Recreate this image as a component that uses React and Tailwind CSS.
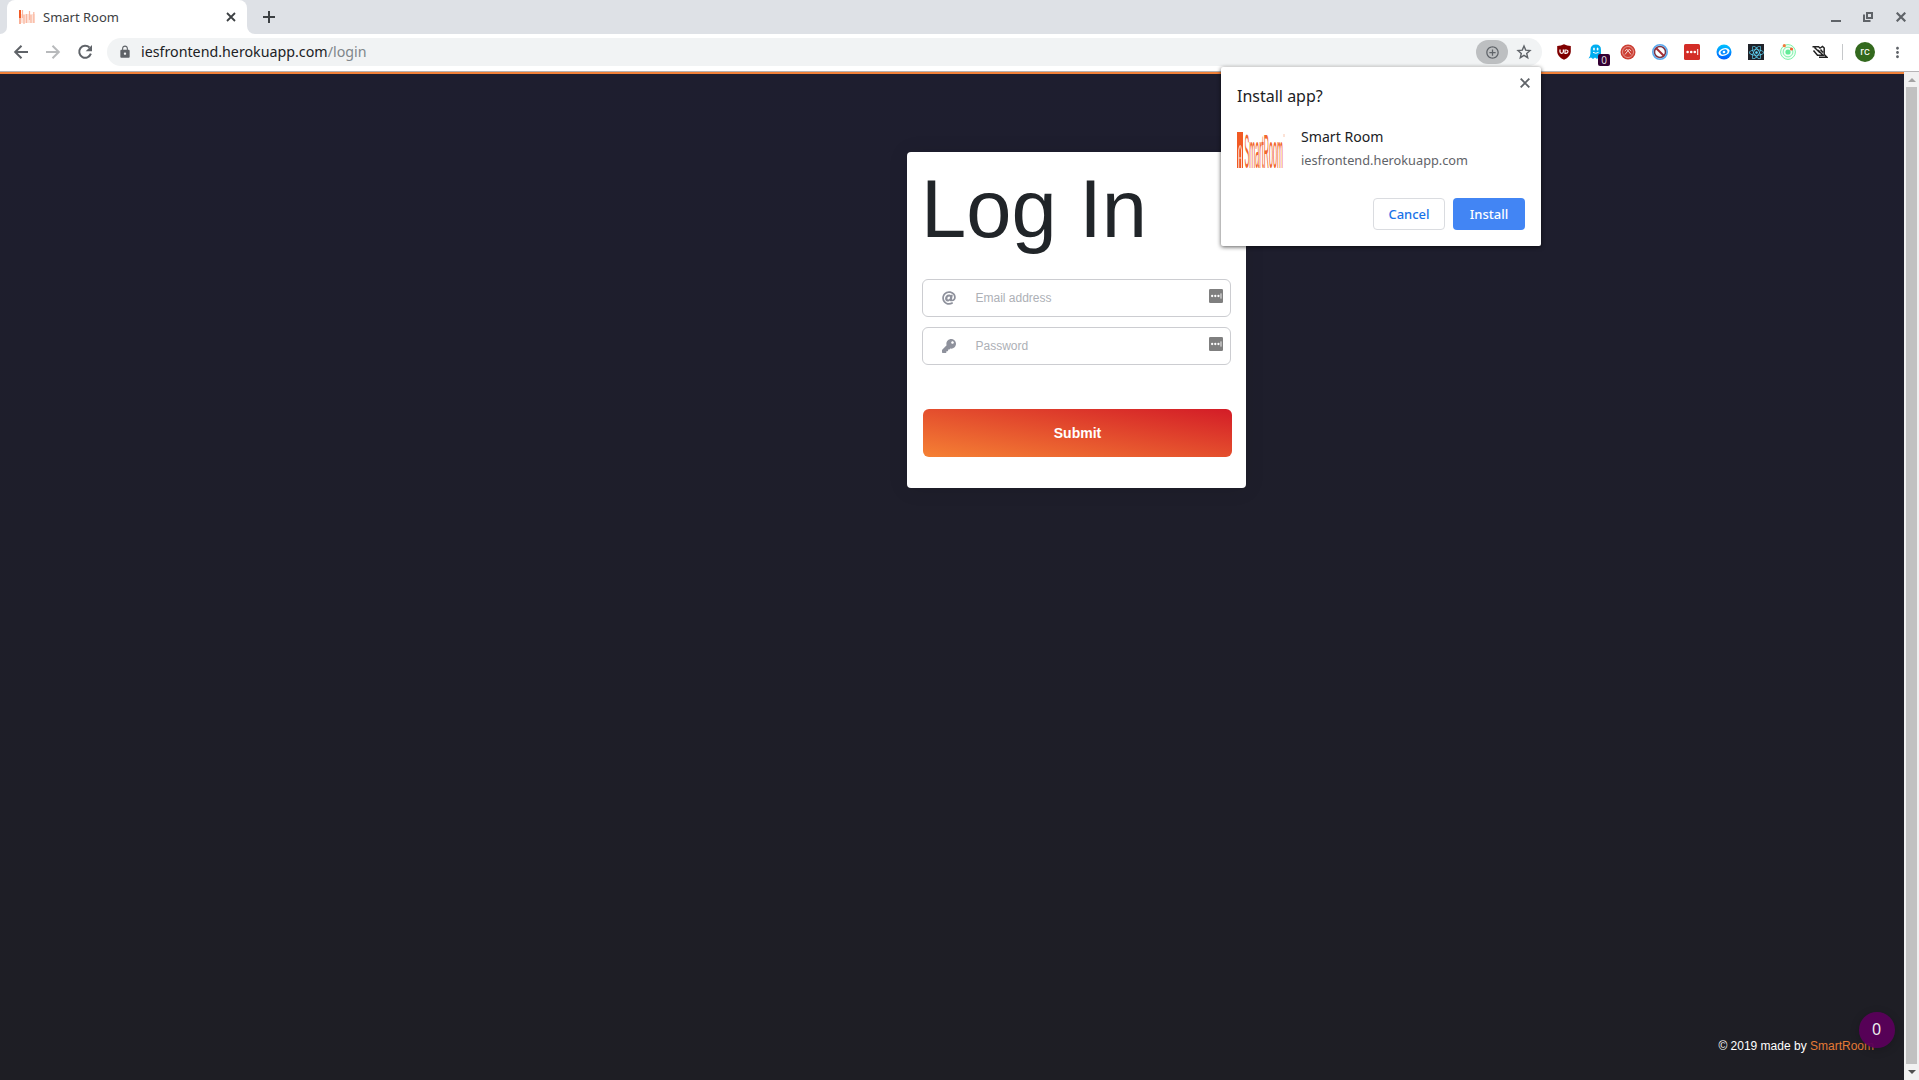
import React from "react";
import { MdLock, MdAddCircleOutline, MdMoreVert } from "react-icons/md";
import { FaAt, FaKey, FaReact } from "react-icons/fa";

function BrandMark({ className }) {
  return (
    <svg className={className} viewBox="0 0 48 48" overflow="visible">
      <rect x="0" y="6" width="6" height="36" fill="#f15a24" />
      <path d="M1.700 42V24q1.500-9 2.800 0V42M1.700 32h2.800" stroke="#fff" strokeWidth="0.800" fill="none" />
      <text x="0" y="0" fontFamily="Liberation Sans" fontSize="48" fill="#f1682f" transform="translate(7.500 41.500) scale(0.150 1)">SmartRoom</text>
      <path d="M47 8v3" stroke="#f8b79b" strokeWidth="0.800" />
    </svg>
  );
}

function Favicon() {
  return (
    <svg className="w-4 h-4" viewBox="0 0 16 16">
      <rect x="0" y="5" width="16" height="9" fill="#fde3da" />
      <rect x="0" y="1" width="2" height="8" fill="#f15a24" />
      <rect x="0" y="9" width="2" height="6" fill="#f9b098" />
      <path d="M3.500 1v8M5 6v9M7.500 5v9M10.500 2v9M12 6v8M14.800 3v11" stroke="#f9b7a0" strokeWidth="1.200" />
    </svg>
  );
}

function ArrowIcon({ className }) {
  return (
    <svg className={className} viewBox="0 0 20 20" fill="none" stroke="currentColor" strokeWidth="2">
      <path d="M17 10H4.500M10.500 3.700L4.200 10l6.300 6.300" />
    </svg>
  );
}

function ReloadIcon({ className }) {
  return (
    <svg className={className} viewBox="0 0 20 20">
      <path d="M14.500 5.500A6 6 0 1 0 15.900 11.700" fill="none" stroke="currentColor" strokeWidth="2" />
      <path d="M17 3v6.300h-6.300z" fill="currentColor" />
    </svg>
  );
}

function StarIcon({ className }) {
  return (
    <svg className={className} viewBox="0 0 16 16">
      <path d="M8 2.100L9.700 6.100L14 6.500L10.700 9.400L11.700 13.700L8 11.400L4.300 13.700L5.300 9.400L2 6.500L6.300 6.100Z" fill="none" stroke="currentColor" strokeWidth="1.400" />
    </svg>
  );
}

function PasswordDots({ className, fill }) {
  return (
    <svg className={className} viewBox="0 0 16 16">
      <rect width="16" height="16" rx="1.500" fill={fill} />
      <circle cx="3.600" cy="8" r="1.300" fill="#fff" />
      <circle cx="7.200" cy="8" r="1.300" fill="#fff" />
      <circle cx="10.800" cy="8" r="1.300" fill="#fff" />
      <rect x="13.200" y="5" width="1" height="6" fill="#fff" />
    </svg>
  );
}

function Extensions() {
  return (
    <div className="flex items-center gap-4 ml-[14px]">
      <svg className="w-4 h-4" viewBox="0 0 16 16">
        <path d="M8 0.300Q11 2 14.800 2V8Q14.500 12.700 8 15.800Q1.500 12.700 1.200 8V2Q5 2 8 0.300Z" fill="#800000" />
        <path d="M4 5.500v2.300q0 1.500 1.700 1.500t1.700-1.500V5.500" stroke="#fff" strokeWidth="1.300" fill="none" />
        <path d="M9 6v3.300h1q2 0 2-1.700t-2-1.600z" stroke="#fff" strokeWidth="1.200" fill="none" />
      </svg>
      <div className="relative w-4 h-4">
        <svg className="w-4 h-4" viewBox="0 0 16 16">
          <path d="M2.500 6Q2.500 0.500 7.800 0.500T13 6V10L14 14L11 13L9 15L7 13.500L5 15L3 13.500L0.500 14.500Q2.500 12 2.500 9Z" fill="#00aef0" />
          <ellipse cx="6" cy="5" rx="0.900" ry="1.500" fill="#fff" />
          <ellipse cx="9.600" cy="5" rx="0.900" ry="1.500" fill="#fff" />
          <path d="M5 8.300q2.800 2 5.600 0" stroke="#fff" fill="none" />
        </svg>
        <span className="absolute left-[10px] top-[10px] w-3 h-3 rounded-[2px] bg-[#330033] text-[#ddd] text-[10px] leading-3 text-center">0</span>
      </div>
      <svg className="w-4 h-4" viewBox="0 0 16 16">
        <circle cx="8" cy="8" r="7.500" fill="#cb3e32" />
        <circle cx="8" cy="8" r="5.500" stroke="#ecaaa4" strokeWidth="0.800" fill="none" />
        <path d="M4.800 7L6.800 5.200L11 10.500M11.200 7L9.200 5.200L5 10.500" stroke="#f7d5d2" strokeWidth="1" fill="none" />
      </svg>
      <svg className="w-4 h-4" viewBox="0 0 16 16">
        <circle cx="8" cy="8" r="7.200" fill="#fff" stroke="#5aaaf0" strokeWidth="1.600" />
        <circle cx="8" cy="8" r="5.500" fill="#fff" stroke="#7a3547" strokeWidth="1.500" />
        <path d="M4 4l8 8" stroke="#a82c34" strokeWidth="1.900" />
      </svg>
      <PasswordDots className="w-4 h-4" fill="#d32d27" />
      <svg className="w-4 h-4" viewBox="0 0 16 16">
        <defs><linearGradient id="eye" x2="0" y2="1"><stop stopColor="#00c3ff" /><stop offset="1" stopColor="#005dff" /></linearGradient></defs>
        <circle cx="8" cy="8" r="7.500" fill="url(#eye)" />
        <g transform="rotate(-18 8 8)">
          <ellipse cx="8" cy="8" rx="5.600" ry="3.700" fill="#fff" />
          <ellipse cx="8" cy="8" rx="3.600" ry="2.400" fill="#0b8cff" />
        </g>
        <circle cx="8" cy="8" r="1.300" fill="#fff" />
      </svg>
      <span className="flex w-4 h-4 items-center justify-center bg-[#20232a]">
        <FaReact className="w-[15px] h-[15px] text-[#61dafb]" />
      </span>
      <svg className="w-4 h-4" viewBox="0 0 16 16">
        <circle cx="8" cy="8" r="7.400" stroke="#7cf2a9" fill="#f2fff6" strokeWidth="1" />
        <circle cx="8" cy="8" r="4.900" stroke="#7cf2a9" fill="none" strokeWidth="1" />
        <circle cx="8" cy="8" r="2.600" fill="#63eb98" />
        <circle cx="4.300" cy="1.700" r="1.600" fill="#f07b3c" />
        <circle cx="11.500" cy="5" r="1.600" fill="#ef6334" />
      </svg>
      <svg className="w-4 h-4" viewBox="0 0 16 16">
        <path d="M0.500 2.700H6.500L8 4M2.500 3.500L8 8.800M1.500 6.500L5.500 11.200H11L6 6" stroke="#222" strokeWidth="1.500" fill="none" />
        <path d="M7.500 4.500L10.500 2.500L12.200 4V11.500M8.500 5.500L11 8.500M7 13.300H15L11.800 10" stroke="#222" strokeWidth="1.500" fill="none" />
      </svg>
    </div>
  );
}

function TabStrip() {
  return (
    <div className="flex h-[34px] bg-[#dee1e6] text-[#3c4043]">
      <div className="flex w-[7px] items-end bg-white">
        <div className="h-full w-full rounded-br-lg bg-[#dee1e6]" />
      </div>
      <div className="bg-[#dee1e6]">
        <div className="flex h-[34px] w-[240px] items-center rounded-t-lg bg-white pl-3 pr-[10px]">
          <Favicon />
          <span className="ml-2 mt-px flex-1 text-[13px]">Smart Room</span>
          <svg className="w-3 h-3" viewBox="0 0 12 12"><path d="M2 2l8 8M10 2l-8 8" stroke="#3c4043" strokeWidth="1.800" /></svg>
        </div>
      </div>
      <div className="w-2 bg-white"><div className="h-full w-full rounded-bl-lg bg-[#dee1e6]" /></div>
      <div className="flex flex-1 items-center pl-2">
        <svg className="w-3 h-3" viewBox="0 0 12 12"><path d="M6 0v12M0 6h12" stroke="#3c4043" strokeWidth="2" /></svg>
      </div>
      <div className="flex items-center gap-[22px] pr-[13px]">
        <svg className="-ml-px mr-px w-[10px] h-[10px]" viewBox="0 0 10 10"><path d="M0 9h10" stroke="#5f6368" strokeWidth="2" /></svg>
        <svg className="-ml-px mr-px w-[10px] h-[10px]" viewBox="0 0 10 10"><path d="M4 1h5v5H4zM1 2.500V9H7.500" stroke="#5f6368" strokeWidth="2" fill="none" /></svg>
        <svg className="w-[10px] h-[10px]" viewBox="0 0 10 10"><path d="M0.700 0.700l8.600 8.600M9.300 0.700L0.700 9.300" stroke="#5f6368" strokeWidth="2.200" /></svg>
      </div>
    </div>
  );
}

function Toolbar() {
  return (
    <div className="flex h-[37px] items-center bg-white pb-px pl-[11px] text-[#5f6368]">
      <ArrowIcon className="w-5 h-5" />
      <ArrowIcon className="ml-3 w-5 h-5 rotate-180 text-[#b8babc]" />
      <ReloadIcon className="ml-3 w-5 h-5" />
      <div className="ml-3 flex h-7 w-[1435px] items-center rounded-full bg-[#f1f3f4] pl-[11px] pr-[10px]">
        <MdLock className="w-[14px] h-[14px]" />
        <span className="ml-[9px] flex-1 text-[14.250px] leading-7 text-[#202124]">iesfrontend.herokuapp.com<span className="text-[#80868b]">/login</span></span>
        <span className="flex h-6 w-8 items-center justify-center rounded-full bg-[#bdbfc1]"><MdAddCircleOutline className="w-[15px] h-[15px]" /></span>
        <StarIcon className="ml-2 w-4 h-4" />
      </div>
      <Extensions />
      <div className="ml-[14px] h-4 w-px bg-[#c6c8ca]" />
      <div className="ml-3 flex h-5 w-5 items-center justify-center rounded-full bg-[#33691e] pb-px font-[Roboto] text-[11px] leading-none text-white">rc</div>
      <MdMoreVert className="ml-[14px] w-[17px] h-[17px]" />
    </div>
  );
}

function Field({ icon, label }) {
  return (
    <div className="flex h-[38px] w-[309px] items-center rounded-md border border-[#cccdd1] pl-[19px] pr-[7px]">
      <span className="text-[#8e919c]">{icon}</span>
      <span className="ml-[19.500px] flex-1 text-xs text-[#adb0b6]">{label}</span>
      <PasswordDots className="mb-[5px] w-[14px] h-[14px]" fill="#7f7f7f" />
    </div>
  );
}

function LoginCard() {
  return (
    <div className="ml-[907px] mt-[78px] h-[336px] w-[339px] rounded-[4px] bg-white px-[15px] shadow-[0_1px_20px_rgba(0,0,0,0.1)]">
      <h1 className="-ml-px pt-[15px] text-[81.300px] leading-[84px] text-[#212529]">Log In</h1>
      <div className="mt-[28px] flex flex-col gap-[10px]">
        <Field icon={<FaAt className="w-[14px] h-[14px]" />} label="Email address" />
        <Field icon={<FaKey className="w-[14px] h-[14px]" />} label="Password" />
      </div>
      <button className="ml-px mt-11 h-12 w-[309px] rounded-md bg-[linear-gradient(to_top_right,#f58134,#d31c27)] text-sm font-bold text-white">Submit</button>
    </div>
  );
}

function InstallDialog() {
  return (
    <div className="absolute left-[1221px] top-[67px] h-[179px] w-[320px] rounded-[2px] bg-white px-4 pt-[17px] text-[#202124] shadow-[0_1px_4px_rgba(0,0,0,0.65)]">
      <svg className="absolute right-[11px] top-[11px] w-[10px] h-[10px]" viewBox="0 0 10 10"><path d="M0.700 0.700l8.600 8.600M9.300 0.700L0.700 9.300" stroke="#5f6368" strokeWidth="1.900" /></svg>
      <div className="text-[16px] leading-6">Install app?</div>
      <div className="mt-[18px] flex">
        <BrandMark className="w-12 h-12" />
        <div className="ml-4">
          <div className="text-[14.100px] leading-[22px]">Smart Room</div>
          <div className="text-[12.750px] leading-6 text-[#5f6368]">iesfrontend.herokuapp.com</div>
        </div>
      </div>
      <div className="mt-6 flex justify-end gap-2 text-[13px] font-medium">
        <button className="h-8 w-[72px] rounded-[4px] border border-[#dadce0] pt-px text-[#1a73e8]">Cancel</button>
        <button className="h-8 w-[72px] rounded-[4px] bg-[#4285f4] pt-px text-white">Install</button>
      </div>
    </div>
  );
}

export default function App() {
  return (
    <div className="relative flex h-[1080px] w-[1919px] flex-col overflow-hidden bg-white font-['Noto_Sans',sans-serif]">
      <TabStrip />
      <Toolbar />
      <div className="h-px shrink-0 bg-[#b6b4b6]" />
      <div className="flex flex-1">
        <main className="flex w-[1904px] flex-col border-t-2 border-[#f08139] bg-[linear-gradient(#1e1e2f,#1e1e24)] font-['Liberation_Sans',sans-serif]">
          <LoginCard />
          <footer className="mt-auto flex justify-end pb-[25px] pr-[30px] text-xs leading-[18px] text-white">
            <span>© 2019 made by <span className="text-[#e47a36]">SmartRoom</span></span>
          </footer>
        </main>
        <div className="flex w-[15px] flex-col items-center bg-[#f1f1f1]">
          <div className="flex h-[15px] items-center"><div className="border-x-[4px] border-b-[4px] border-x-transparent border-b-[#a3a3a3]" /></div>
          <div className="w-[11px] flex-1 bg-[#c1c1c1]" />
          <div className="flex h-4 items-center"><div className="border-x-[4px] border-t-[4px] border-x-transparent border-t-[#505050]" /></div>
        </div>
      </div>
      <div className="absolute left-[1859px] top-[1012px] flex h-9 w-9 items-center justify-center rounded-full bg-[#5a005a]/95 pb-[2px] pr-px text-[16px] text-[#eee] shadow-[0_2px_10px_rgba(0,0,0,0.2)]">0</div>
      <InstallDialog />
    </div>
  );
}
